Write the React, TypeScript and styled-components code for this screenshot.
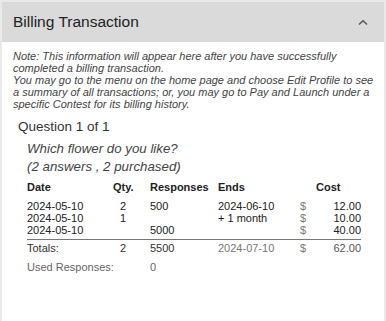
import React from "react";
import styled, { createGlobalStyle } from "styled-components";

const GlobalStyle = createGlobalStyle`
  html, body {
    margin: 0;
    padding: 0;
    background: #fff;
    font-family: "Liberation Sans", Arial, Helvetica, sans-serif;
  }
`;

type Row = {
  date: string;
  qty: string;
  responses: string;
  ends: string;
  cost: string;
};

const rows: Row[] = [
  { date: "2024-05-10", qty: "2", responses: "500", ends: "2024-06-10", cost: "12.00" },
  { date: "2024-05-10", qty: "1", responses: "", ends: "+ 1 month", cost: "10.00" },
  { date: "2024-05-10", qty: "", responses: "5000", ends: "", cost: "40.00" },
];

function App() {
  return (
    <>
      <GlobalStyle />
      <Card>
        <Header>
          <Title>Billing Transaction</Title>
          <svg width="10" height="7" viewBox="0 0 10 7">
            <polyline points="1,5.5 5,1.8 9,5.5" fill="none" stroke="#555" strokeWidth="1.5" />
          </svg>
        </Header>
        <Body>
          <Note>
            Note: This information will appear here after you have successfully
            completed a billing transaction.
            <br />
            You may go to the menu on the home page and choose Edit Profile to see a
            summary of all transactions; or, you may go to Pay and Launch under a
            specific Contest for its billing history.
          </Note>
          <QuestionTitle>Question 1 of 1</QuestionTitle>
          <Section>
            <QuestionText>
              Which flower do you like?
              <br />
              (2 answers , 2 purchased)
            </QuestionText>
            <Table>
              <HeadCell>Date</HeadCell>
              <HeadCell>Qty.</HeadCell>
              <HeadCell>Responses</HeadCell>
              <HeadCell>Ends</HeadCell>
              <HeadCell />
              <HeadCell $align="left">Cost</HeadCell>
              {rows.map((r, i) => (
                <React.Fragment key={i}>
                  <Cell $first={i === 0}>{r.date}</Cell>
                  <Cell $first={i === 0} $pad={7}>{r.qty}</Cell>
                  <Cell $first={i === 0}>{r.responses}</Cell>
                  <Cell $first={i === 0}>{r.ends}</Cell>
                  <Cell $first={i === 0} $tone="#777">$</Cell>
                  <Cell $first={i === 0} $align="right">{r.cost}</Cell>
                </React.Fragment>
              ))}
              <Rule />
              <Cell $tone="#333">Totals:</Cell>
              <Cell $tone="#333" $pad={7}>2</Cell>
              <Cell $tone="#333">5500</Cell>
              <Cell $tone="#777">2024-07-10</Cell>
              <Cell $tone="#777">$</Cell>
              <Cell $tone="#555" $align="right">62.00</Cell>
            </Table>
            <UsedRow>
              <span>Used Responses:</span>
              <span>0</span>
            </UsedRow>
          </Section>
        </Body>
      </Card>
    </>
  );
}

export default App;

const Card = styled.div`
  width: 386px;
  height: 321px;
  box-sizing: border-box;
  border: 2px solid #e9e9e9;
  border-bottom: none;
  background: #fff;
  overflow: hidden;
`;

const Header = styled.div`
  height: 40px;
  background: #dadada;
  display: flex;
  align-items: center;
  justify-content: space-between;
  padding: 0 16px 0 11px;
`;

const Title = styled.div`
  font-size: 15.5px;
  color: #222;
`;

const Body = styled.div`
  padding: 8px 10px 0 11px;
`;

const Note = styled.div`
  font-size: 11px;
  line-height: 12px;
  font-style: italic;
  color: #444;
`;

const QuestionTitle = styled.div`
  margin: 8px 0 0 5px;
  font-size: 13.5px;
  line-height: 18px;
  color: #333;
`;

const Section = styled.div`
  padding-left: 14px;
`;

const QuestionText = styled.div`
  margin-top: 4px;
  font-size: 13.3px;
  line-height: 18px;
  font-style: italic;
  color: #444;
`;

const Table = styled.div`
  display: grid;
  grid-template-columns: 86px 37px 68px 82px 16px 45px;
  margin-top: 3px;
  font-size: 11px;
  line-height: 12px;
`;

const HeadCell = styled.div<{ $align?: string }>`
  font-weight: bold;
  color: #222;
  padding: 2px 0 5px;
  text-align: ${(p) => p.$align || "left"};
`;

const Cell = styled.div<{ $align?: string; $pad?: number; $tone?: string; $first?: boolean }>`
  color: ${(p) => p.$tone || "#222"};
  text-align: ${(p) => p.$align || "left"};
  padding-left: ${(p) => p.$pad || 0}px;
  padding-top: ${(p) => (p.$first ? 2 : 0)}px;
`;

const Rule = styled.div`
  grid-column: 1 / -1;
  height: 1px;
  background: #777;
  margin: 3px 0 2px;
`;

const UsedRow = styled.div`
  display: grid;
  grid-template-columns: 123px 1fr;
  margin-top: 7px;
  font-size: 11px;
  line-height: 12px;
  color: #666;
`;
